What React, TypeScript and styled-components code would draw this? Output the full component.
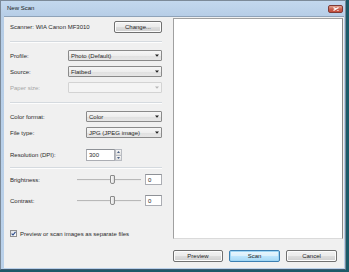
import * as React from 'react';
import styled, { createGlobalStyle } from 'styled-components';

const GlobalStyle = createGlobalStyle`
  html, body {
    margin: 0;
    padding: 0;
  }
  body {
    font-family: "Liberation Sans", Arial, sans-serif;
    font-size: 6px;
    color: #2a2a2a;
  }
`;

const Arrow: React.FC<{ disabled?: boolean }> = ({ disabled }) => (
  <svg width="4" height="3" viewBox="0 0 4 3">
    <path d="M0 0.5 L4 0.5 L2 2.7 Z" fill={disabled ? '#b5b5b5' : '#1e1e1e'} />
  </svg>
);

const Select: React.FC<{ value?: string; disabled?: boolean }> = ({ value, disabled }) => (
  <Combo $disabled={disabled}>
    <ComboText>{value}</ComboText>
    <Arrow disabled={disabled} />
  </Combo>
);

const Slider: React.FC<{ pos: number }> = ({ pos }) => (
  <Track>
    <TrackLine />
    <Thumb style={{ left: pos }} />
  </Track>
);

export default function App() {
  return (
    <Desktop>
      <GlobalStyle />
      <Window>
        <TitleBar>
          <Title>New Scan</Title>
          <CloseButton>
            <svg width="6" height="4" viewBox="0 0 6 4">
              <path d="M0.5 0.5 L5.5 3.5 M5.5 0.5 L0.5 3.5" stroke="#fff" strokeWidth="1.2" />
            </svg>
          </CloseButton>
        </TitleBar>
        <Client>
          <LeftPanel>
            <ScannerRow>
              <span>Scanner: WIA Canon MF3010</span>
              <Button $width={48}>Change...</Button>
            </ScannerRow>
            <Separator $top={8} />

            <Row $top={7} $label={58}>
              <Label>Profile:</Label>
              <Select value="Photo (Default)" />
            </Row>
            <Row $top={5} $label={58}>
              <Label>Source:</Label>
              <Select value="Flatbed" />
            </Row>
            <Row $top={5} $label={58}>
              <Label $disabled>Paper size:</Label>
              <Select disabled />
            </Row>
            <Separator $top={9} />

            <Row $top={7} $label={76}>
              <Label>Color format:</Label>
              <Select value="Color" />
            </Row>
            <Row $top={5} $label={76}>
              <Label>File type:</Label>
              <Select value="JPG (JPEG image)" />
            </Row>
            <Row $top={11} $label={76} $height={12}>
              <Label>Resolution (DPI):</Label>
              <Spin>
                <NumberBox $width={29}>300</NumberBox>
                <SpinButtons>
                  <SpinBtn>
                    <svg width="3" height="2" viewBox="0 0 3 2"><path d="M0 2 L3 2 L1.5 0 Z" fill="#4d6185" /></svg>
                  </SpinBtn>
                  <SpinBtn>
                    <svg width="3" height="2" viewBox="0 0 3 2"><path d="M0 0 L3 0 L1.5 2 Z" fill="#4d6185" /></svg>
                  </SpinBtn>
                </SpinButtons>
              </Spin>
            </Row>
            <Separator $top={6} />

            <Row $top={5} $label={67}>
              <Label>Brightness:</Label>
              <Slider pos={33} />
              <NumberBox $width={17} $gap={4}>0</NumberBox>
            </Row>
            <Row $top={10} $label={67}>
              <Label>Contrast:</Label>
              <Slider pos={33} />
              <NumberBox $width={17} $gap={4}>0</NumberBox>
            </Row>

            <CheckRow>
              <CheckBox>
                <svg width="5" height="5" viewBox="0 0 5 5">
                  <path d="M0.6 2.6 L2 4 L4.5 0.8" stroke="#2a4a8a" strokeWidth="1.1" fill="none" />
                </svg>
              </CheckBox>
              <span>Preview or scan images as separate files</span>
            </CheckRow>
          </LeftPanel>

          <RightPanel>
            <PreviewBox />
            <ButtonBar>
              <Button $width={50}>Preview</Button>
              <Button $width={51} $primary>Scan</Button>
              <Button $width={51}>Cancel</Button>
            </ButtonBar>
          </RightPanel>
        </Client>
      </Window>
    </Desktop>
  );
}

const Desktop = styled.div`
  width: 349px;
  height: 272px;
  background: #1b5a68;
  overflow: hidden;
`;

const Window = styled.div`
  box-sizing: border-box;
  width: 346px;
  height: 270px;
  border: 1px solid #7c8a99;
  border-bottom-color: #3f5a70;
  background: linear-gradient(#c3d8ee 0px, #b6cde6 16px, #bad1ea 100%);
  display: flex;
  flex-direction: column;
  padding: 0 1px 1px 3px;
`;

const TitleBar = styled.div`
  height: 15px;
  display: flex;
  align-items: flex-start;
  padding: 0 1px 0 3px;
`;

const Title = styled.div`
  font-size: 6px;
  color: #1b1b1b;
  flex: 1;
  padding-top: 4px;
`;

const CloseButton = styled.div`
  width: 15px;
  height: 8px;
  margin-top: 4px;
  box-sizing: border-box;
  border: 1px solid #7e3a36;
  border-radius: 2px;
  background: linear-gradient(#e4a592, #c85e4d 55%, #c44d3b);
  display: flex;
  align-items: center;
  justify-content: center;
`;

const Client = styled.div`
  flex: 1;
  display: flex;
  background: #f0f0f0;
  border-top: 1px solid #8fa3b9;
`;

const LeftPanel = styled.div`
  width: 168px;
  box-sizing: border-box;
  padding: 0 5px 0 6px;
  display: flex;
  flex-direction: column;
`;

const ScannerRow = styled.div`
  margin-top: 4px;
  height: 12px;
  display: flex;
  align-items: center;
  justify-content: space-between;
`;

const Separator = styled.div<{ $top: number }>`
  margin-top: ${p => p.$top}px;
  height: 1px;
  background: #d5dadf;
  border-bottom: 1px solid #fdfdfd;
`;

const Row = styled.div<{ $top: number; $label: number; $height?: number }>`
  margin-top: ${p => p.$top}px;
  height: ${p => p.$height ?? 11}px;
  display: grid;
  grid-template-columns: ${p => p.$label}px 1fr auto;
  align-items: center;
`;

const Label = styled.span<{ $disabled?: boolean }>`
  color: ${p => (p.$disabled ? '#a6a6a6' : '#2a2a2a')};
  white-space: nowrap;
`;

const Combo = styled.div<{ $disabled?: boolean }>`
  grid-column: 2 / 4;
  height: 11px;
  box-sizing: border-box;
  border: 1px solid ${p => (p.$disabled ? '#d3d3d3' : '#8a8a8a')};
  border-radius: 1px;
  background: ${p =>
    p.$disabled ? '#f4f4f4' : 'linear-gradient(#f6f6f6, #eeeeee 50%, #e0e0e0 51%, #e6e6e6)'};
  display: flex;
  align-items: center;
  padding: 0 2px 0 2px;
`;

const ComboText = styled.span`
  flex: 1;
  white-space: nowrap;
`;

const Spin = styled.div`
  display: flex;
  height: 12px;
`;

const NumberBox = styled.div<{ $width: number; $gap?: number }>`
  width: ${p => p.$width}px;
  height: ${p => (p.$gap ? 11 : 12)}px;
  margin-left: ${p => p.$gap ?? 0}px;
  box-sizing: border-box;
  border: 1px solid #abadb3;
  border-top-color: #8e9196;
  background: #fff;
  padding-left: 2px;
  display: flex;
  align-items: center;
`;

const SpinButtons = styled.div`
  width: 7px;
  display: flex;
  flex-direction: column;
`;

const SpinBtn = styled.div`
  flex: 1;
  box-sizing: border-box;
  border: 1px solid #b9bcc2;
  background: linear-gradient(#f6f6f6, #dedede);
  display: flex;
  align-items: center;
  justify-content: center;
  & + & {
    border-top: none;
  }
`;

const Track = styled.div`
  position: relative;
  height: 11px;
`;

const TrackLine = styled.div`
  position: absolute;
  left: 0;
  right: 0;
  top: 5px;
  height: 1px;
  background: #b8b8b8;
  border-bottom: 1px solid #eaeaea;
`;

const Thumb = styled.div`
  position: absolute;
  top: 1px;
  width: 5px;
  height: 9px;
  box-sizing: border-box;
  border: 1px solid #8a8a8a;
  border-radius: 1px 1px 2px 2px;
  background: linear-gradient(90deg, #fbfbfb, #dcdcdc);
`;

const CheckRow = styled.div`
  margin-top: 24px;
  display: flex;
  align-items: center;
  gap: 3px;
`;

const CheckBox = styled.div`
  width: 7px;
  height: 7px;
  box-sizing: border-box;
  border: 1px solid #8f8f8f;
  background: linear-gradient(135deg, #dfe3e8, #fbfbfb);
  display: flex;
  align-items: center;
  justify-content: center;
`;

const RightPanel = styled.div`
  flex: 1;
  display: flex;
  flex-direction: column;
  padding: 1px 1px 0 6px;
`;

const PreviewBox = styled.div`
  height: 221px;
  box-sizing: border-box;
  background: #fff;
  border: 1px solid #a0a0a0;
  border-right-color: #8a8a8a;
  border-bottom-color: #dadada;
`;

const ButtonBar = styled.div`
  margin-top: 11px;
  display: flex;
  justify-content: flex-end;
  gap: 6px;
  padding-right: 6px;
`;

const Button = styled.div<{ $width: number; $primary?: boolean }>`
  width: ${p => p.$width}px;
  height: 12px;
  box-sizing: border-box;
  border: 1px solid ${p => (p.$primary ? '#3c7fb1' : '#707070')};
  border-radius: 2px;
  background: ${p =>
    p.$primary
      ? 'linear-gradient(#eaf6fd, #d9f0fc 50%, #bee6fd 51%, #a7d9f5)'
      : 'linear-gradient(#f2f2f2, #ebebeb 50%, #dddddd 51%, #cfcfcf)'};
  box-shadow: inset 0 0 0 1px ${p => (p.$primary ? '#9fd6f5' : '#fcfcfc')};
  display: flex;
  align-items: center;
  justify-content: center;
  color: #1e1e1e;
`;
